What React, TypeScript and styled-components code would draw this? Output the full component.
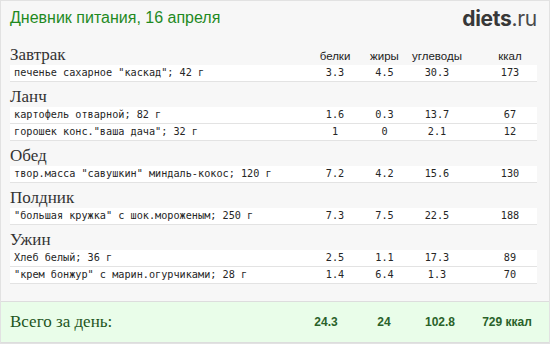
import React from "react";
import styled, { createGlobalStyle } from "styled-components";

const Global = createGlobalStyle`
  html, body { margin: 0; padding: 0; background: #ffffff; }
  * { box-sizing: border-box; }
`;

const Card = styled.div`
  width: 550px;
  height: 344px;
  border: 1px solid #e2e2e2;
  background: #f7f7f7;
  display: flex;
  flex-direction: column;
`;

const Header = styled.div`
  height: 39px;
  padding: 6px 12px 0 9px;
  display: flex;
  justify-content: space-between;
  align-items: flex-start;
`;

const Title = styled.div`
  font-family: "Liberation Sans", Arial, sans-serif;
  font-size: 16px;
  line-height: 21px;
  color: #1f8a1f;
`;

const Logo = styled.div`
  font-family: Inter, "Open Sans", sans-serif;
  font-size: 21px;
  line-height: 24px;
  color: #383838;
  letter-spacing: -0.3px;
  b { font-weight: 700; }
  span { font-weight: 400; color: #4a4a4a; }
`;

const Body = styled.div`
  padding: 0 12px 0 9px;
`;

const Grid = styled.div`
  display: grid;
  grid-template-columns: 1fr 50px 49px 56px 72px;
`;

const HeadingRow = styled(Grid)`
  height: 25px;
  padding-top: 5px;
  align-items: baseline;
`;

const Heading = styled.div`
  font-family: "Liberation Serif", "Times New Roman", serif;
  font-size: 17px;
  line-height: 19px;
  color: #333333;
`;

const ColLabel = styled.div<{ $last?: boolean }>`
  font-family: "Liberation Sans", Arial, sans-serif;
  font-size: 11.5px;
  color: #222222;
  text-align: center;
  padding-left: ${(p) => (p.$last ? "18px" : "0")};
`;

const Row = styled(Grid)`
  height: 17px;
  background: #ffffff;
  border-bottom: 1px solid #e3e3e3;
  align-items: center;
  font-family: "DejaVu Sans Mono", monospace;
  font-size: 10.2px;
  line-height: 16px;
  color: #262626;
`;

const Name = styled.div`
  padding-left: 4px;
  white-space: nowrap;
`;

const Num = styled.div<{ $last?: boolean }>`
  text-align: center;
  padding-left: ${(p) => (p.$last ? "18px" : "0")};
`;

const Spacer = styled.div`
  flex: 1;
`;

const Totals = styled.div`
  height: 42px;
  border-top: 1px solid #dddddd;
  border-bottom: 1px solid #dddddd;
  background: #e9fde9;
  padding: 0 12px 0 9px;
  display: grid;
  grid-template-columns: 1fr 52px 64px 48px 73px;
  align-items: center;
`;

const TotalLabel = styled.div`
  font-family: "Liberation Serif", "Times New Roman", serif;
  font-size: 17px;
  color: #1d551d;
`;

const TotalNum = styled.div<{ $last?: boolean }>`
  font-family: "Liberation Sans", Arial, sans-serif;
  font-weight: 700;
  font-size: 12px;
  color: #2a622a;
  text-align: center;
  padding-left: ${(p) => (p.$last ? "13px" : "0")};
  white-space: nowrap;
`;

type Item = [string, string, string, string, string];
const sections: { name: string; items: Item[] }[] = [
  { name: "Завтрак", items: [['печенье сахарное "каскад"; 42 г', "3.3", "4.5", "30.3", "173"]] },
  {
    name: "Ланч",
    items: [
      ["картофель отварной; 82 г", "1.6", "0.3", "13.7", "67"],
      ['горошек конс."ваша дача"; 32 г', "1", "0", "2.1", "12"],
    ],
  },
  { name: "Обед", items: [['твор.масса "савушкин" миндаль-кокос; 120 г', "7.2", "4.2", "15.6", "130"]] },
  { name: "Полдник", items: [['"большая кружка" с шок.мороженым; 250 г', "7.3", "7.5", "22.5", "188"]] },
  {
    name: "Ужин",
    items: [
      ["Хлеб белый; 36 г", "2.5", "1.1", "17.3", "89"],
      ['"крем бонжур" с марин.огурчиками; 28 г', "1.4", "6.4", "1.3", "70"],
    ],
  },
];

export default function App() {
  return (
    <>
      <Global />
      <Card>
        <Header>
          <Title>Дневник питания, 16 апреля</Title>
          <Logo>
            <b>diets</b>
            <span>.ru</span>
          </Logo>
        </Header>
        <Body>
          {sections.map((s, i) => (
            <React.Fragment key={s.name}>
              <HeadingRow>
                <Heading>{s.name}</Heading>
                {i === 0 && (
                  <>
                    <ColLabel>белки</ColLabel>
                    <ColLabel>жиры</ColLabel>
                    <ColLabel>углеводы</ColLabel>
                    <ColLabel $last>ккал</ColLabel>
                  </>
                )}
              </HeadingRow>
              {s.items.map((it) => (
                <Row key={it[0]}>
                  <Name>{it[0]}</Name>
                  <Num>{it[1]}</Num>
                  <Num>{it[2]}</Num>
                  <Num>{it[3]}</Num>
                  <Num $last>{it[4]}</Num>
                </Row>
              ))}
            </React.Fragment>
          ))}
        </Body>
        <Spacer />
        <Totals>
          <TotalLabel>Всего за день:</TotalLabel>
          <TotalNum>24.3</TotalNum>
          <TotalNum>24</TotalNum>
          <TotalNum>102.8</TotalNum>
          <TotalNum $last>729 ккал</TotalNum>
        </Totals>
      </Card>
    </>
  );
}
